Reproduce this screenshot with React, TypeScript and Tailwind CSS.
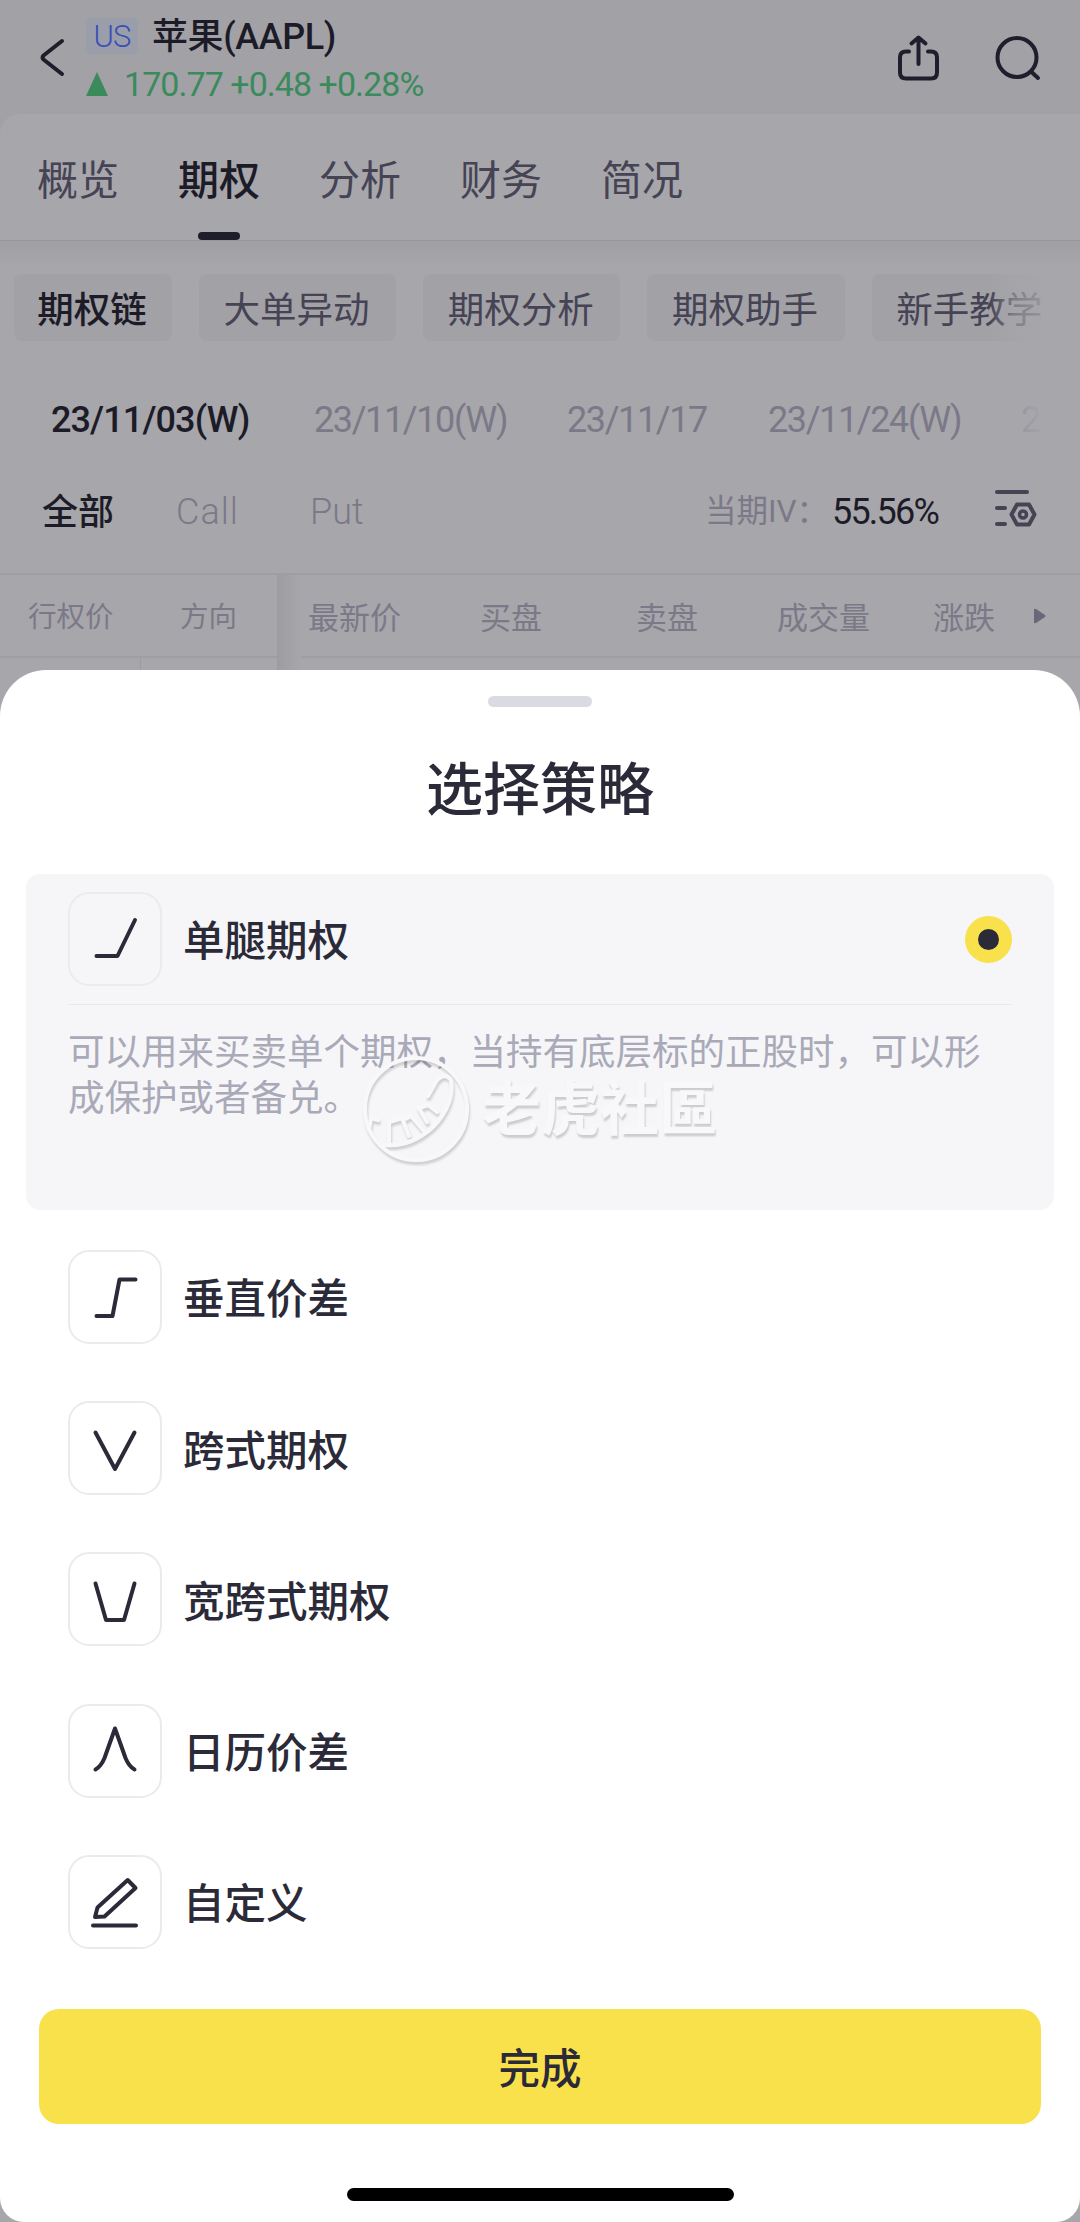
import type { ReactNode } from "react";

const tabs = ["概览", "期权", "分析", "财务", "简况"];
const chips = ["期权链", "大单异动", "期权分析", "期权助手", "新手教学"];

const strokeProps = {
  fill: "none",
  stroke: "#2b2a38",
  strokeWidth: 4,
  strokeLinecap: "round" as const,
  strokeLinejoin: "round" as const,
};

function StrategyIcon({ children }: { children: ReactNode }) {
  return (
    <div className="h-[94px] w-[94px] shrink-0 rounded-[21px] border-2 border-[#ebebef]">
      <svg className="-m-0.5 h-[94px] w-[94px]" viewBox="0 0 94 94" {...strokeProps}>
        {children}
      </svg>
    </div>
  );
}

const strategies: { name: string; icon: ReactNode }[] = [
  { name: "垂直价差", icon: <path d="M28.5 66H44.5L51.5 29.5H67.5" /> },
  { name: "跨式期权", icon: <path d="M27.5 31.5L47 68L66.5 31.5" /> },
  { name: "宽跨式期权", icon: <path d="M27.5 31.5L38 68H56L66.5 31.5" /> },
  { name: "日历价差", icon: <path d="M27.5 65.5Q33 62.5 36.5 54L47 24.5L57.5 54Q61 62.5 66.5 65.5" /> },
  {
    name: "自定义",
    icon: <path d="M27 62L29.5 52.5L59.7 25L67.5 33L36.5 61.5ZM25 70.5H68" />,
  },
];

function Header() {
  return (
    <header className="flex h-[114px] bg-[#a2a1a6]">
      <svg className="mt-[37px] ml-[38px] h-[42px] w-[30px] shrink-0" viewBox="0 0 30 42" fill="none" stroke="#1e1d2a" strokeWidth="4" strokeLinecap="round" strokeLinejoin="round">
        <path d="M24 4L5.500 18.500Q3.500 20.500 5.500 22.500L24 37" />
      </svg>
      <div className="ml-[18px] flex-1">
        <div className="mt-[12px] flex h-[48px] items-center">
          <span className="flex h-[36px] w-[52px] items-center justify-center rounded-[4px] bg-[#9a9eab] pt-[2px] text-[31px] font-light tracking-[-1px] text-[#3a50b4]">US</span>
          <span className="ml-[14px] pt-px text-[36px] font-medium tracking-[-0.4px] whitespace-nowrap text-[#1c1b28]">苹果(AAPL)</span>
        </div>
        <div className="mt-px flex h-[46px] items-center text-[#3a8a5c]">
          <svg className="h-[26px] w-[22px]" viewBox="0 0 22 26" fill="#3a8a5c">
            <path d="M11 1L22 25H0Z" />
          </svg>
          <span className="ml-[16px] pt-px text-[34px] tracking-[-0.950px] whitespace-nowrap">170.77 +0.48 +0.28%</span>
        </div>
      </div>
      <svg className="mt-[34px] h-[52px] w-[46px]" viewBox="0 0 46 52" fill="none" stroke="#1f1e2c" strokeWidth="4" strokeLinecap="round" strokeLinejoin="round">
        <path d="M12 17.500H9Q3 17.500 3 23.500V38.500Q3 44.500 9 44.500H34Q40 44.500 40 38.500V23.500Q40 17.500 34 17.500H31M21.500 30V4M14.500 9.500L21.500 3.500L28.500 9.500" />
      </svg>
      <svg className="mt-[34px] mr-[36px] ml-[51px] h-[52px] w-[50px]" viewBox="0 0 50 52" fill="none" stroke="#1f1e2c" strokeWidth="4" strokeLinecap="round">
        <circle cx="23" cy="23.500" r="19.500" />
        <path d="M37 37.500L44 44" />
      </svg>
    </header>
  );
}

function Tabs() {
  return (
    <nav className="bg-[#a2a1a6]">
      <div className="flex h-[127px] gap-[59px] rounded-tl-[20px] border-b border-[#98979d] bg-[#a7a6ab] pl-[37px]">
        {tabs.map((t, i) => (
          <div key={t} className={i === 1 ? "flex w-[82px] flex-col items-center font-medium text-[#1c1b28]" : "flex w-[82px] flex-col items-center text-[#454354]"}>
            <span className="mt-[37px] text-[41px] leading-[60px] whitespace-nowrap">{t}</span>
            {i === 1 && <span className="mt-[21px] h-[8px] w-[42px] rounded-full bg-[#1e1d2b]" />}
          </div>
        ))}
      </div>
    </nav>
  );
}

function Filters() {
  return (
    <section className="h-[332px] bg-linear-to-b from-[#a09fa4] to-[#a7a6ab] to-[8%]">
      <div className="relative flex w-[1041px] gap-[27px] overflow-hidden pt-[33px] pl-[14px]">
        {chips.map((c, i) => (
          <span key={c} className={i === 0 ? "flex h-[67px] w-[158px] shrink-0 items-center justify-center rounded-[8px] bg-[#a2a1a6] pt-[7px] pr-[2px] text-[36.500px] font-medium text-[#1c1b28]" : "flex h-[67px] w-[197.200px] shrink-0 items-center justify-center rounded-[8px] bg-[#a2a1a6] pt-[7px] pr-[2px] text-[36.500px] text-[#454354]"}>
            {c}
          </span>
        ))}
        <div className="absolute top-[33px] right-0 h-[67px] w-[52px] bg-linear-to-r from-[#a7a6ab]/0 via-[#a7a6ab]/60 to-[#a7a6ab]/80" />
      </div>
      <div className="relative mt-[49px] flex h-[60px] w-[1045px] items-center overflow-hidden pl-[51px] text-[36px] tracking-[-1.400px] whitespace-nowrap text-[#7b7988]">
        <span className="w-[263px] shrink-0 font-medium tracking-[-0.900px] text-[#1c1b28]">23/11/03(W)</span>
        <span className="w-[253px] shrink-0">23/11/10(W)</span>
        <span className="w-[201px] shrink-0">23/11/17</span>
        <span className="w-[253px] shrink-0">23/11/24(W)</span>
        <span className="shrink-0">23/12/01(W)</span>
        <div className="absolute top-0 right-0 h-full w-[72px] bg-linear-to-r from-[#a7a6ab]/0 to-[#a7a6ab]" />
      </div>
      <div className="mt-[31px] flex h-[60px] items-center text-[36px] whitespace-nowrap text-[#7b7988]">
        <span className="ml-[42px] w-[134px] pt-[3px] font-medium text-[#1c1b28]">全部</span>
        <span className="w-[134px] pt-px font-light tracking-[1px]">Call</span>
        <span className="flex-1 pt-px font-light">Put</span>
        <span className="pt-[2px] text-[31.500px]">当期IV：</span>
        <span className="ml-[4px] w-[162px] pt-px tracking-[-1.800px] text-[#1c1b28]">55.56%</span>
        <svg className="mr-[42px] h-[42px] w-[44px]" viewBox="0 0 44 42" fill="none" stroke="#454354" strokeWidth="4" strokeLinecap="round" strokeLinejoin="round">
          <path d="M3 2H33M3 18H11M3 34H11M17.500 24.500L23 14.500H35L40.500 24.500L35 34.500H23Z" />
          <circle cx="29" cy="24.500" r="3.500" strokeWidth="3.500" />
        </svg>
      </div>
    </section>
  );
}

function TableHead() {
  return (
    <section className="h-[170px] bg-[#a7a6ab] text-[31px] whitespace-nowrap text-[#7b7988]">
      <div className="flex h-[85px] items-center border-y-2 border-[#9f9ea3]">
        <span className="ml-[28px] w-[152px] pt-[6px] text-[28.500px]">行权价</span>
        <span className="w-[97px] pt-[6px] text-[28.500px]">方向</span>
        <div className="h-[98px] w-[24px] shrink-0 self-start bg-linear-to-r from-[#9d9ca1] to-[#a7a6ab]" />
        <span className="ml-[7px] w-[172px] pt-[7px]">最新价</span>
        <span className="w-[156px] pt-[7px]">买盘</span>
        <span className="w-[141px] pt-[7px]">卖盘</span>
        <span className="w-[156px] pt-[7px]">成交量</span>
        <span className="w-[100px] pt-[7px]">涨跌</span>
        <svg className="h-[16px] w-[14px]" viewBox="0 0 14 16" fill="#6a6878">
          <path d="M1 2Q1 0 3 1L12 7Q13 8 12 9L3 15Q1 16 1 14Z" />
        </svg>
      </div>
      <div className="ml-[140px] h-[40px] w-px bg-[#9c9ba1]" />
    </section>
  );
}

function Watermark() {
  return (
    <div className="absolute top-[180px] left-[335px] flex items-center">
      <svg className="h-[112px] w-[112px] drop-shadow-[1px_3px_1px_rgba(0,0,0,0.16)]" viewBox="0 0 112 112" fill="none" stroke="#f8f8fa" strokeWidth="4" strokeLinecap="round" strokeLinejoin="round">
        <circle cx="55" cy="55" r="51" />
        <path d="M8 76L10 64L17 66M28 90V68L41 64L48 82M42 66L50 62L63 77M66 68L58 54L67 51L76 58M67 42L76 26Q84 18 90 26Q94 50 72 73Q50 93 24 91" />
      </svg>
      <span className="ml-[9px] text-[59px] leading-[70px] font-bold text-[#f8f8fa] [text-shadow:1px_3px_2px_rgba(0,0,0,0.17)]">老虎社區</span>
    </div>
  );
}

export default function App() {
  return (
    <div className="h-[2222px] w-[1080px] overflow-hidden bg-[#a7a6ab] font-['Roboto','Noto_Sans_CJK_SC',sans-serif]">
      <Header />
      <Tabs />
      <Filters />
      <TableHead />
      <main className="relative -mt-[73px] flex h-[1552px] flex-col rounded-t-[46px] rounded-b-[24px] bg-white text-[#2b2a38]">
        <div className="mx-auto mt-[26px] h-[11px] w-[104px] shrink-0 rounded-full bg-[#dadae2]" />
        <h1 className="mt-[42px] text-center text-[57px] leading-[84px] font-medium">选择策略</h1>
        <section className="relative mx-[26px] mt-[41px] h-[336px] shrink-0 rounded-[14px] bg-[#f6f6f8] px-[42px] pt-[18px]">
          <div className="flex h-[94px] items-center">
            <StrategyIcon>
              <path d="M28.500 64H49.500L67 28" />
            </StrategyIcon>
            <span className="ml-[21px] flex-1 pt-[7px] text-[41.500px] font-medium">单腿期权</span>
            <span className="flex h-[47px] w-[47px] items-center justify-center rounded-full bg-[#f9e14b]">
              <span className="h-[21px] w-[21px] rounded-full bg-[#2b2a38]" />
            </span>
          </div>
          <div className="mt-[18px] h-px bg-[#e9e9ee]" />
          <p className="mt-[25px] text-[36.500px] leading-[46px] whitespace-nowrap text-[#a9a9b8]">
            可以用来买卖单个期权，当持有底层标的正股时，可以形
            <br />
            成保护或者备兑。
          </p>
          <Watermark />
        </section>
        <ul className="mt-[40px] ml-[68px] flex flex-col gap-[57.200px]">
          {strategies.map((s) => (
            <li key={s.name} className="flex h-[94px] items-center">
              <StrategyIcon>{s.icon}</StrategyIcon>
              <span className="ml-[21px] pt-[7px] text-[41.500px] font-medium">{s.name}</span>
            </li>
          ))}
        </ul>
        <button className="mx-[39px] mt-[60px] h-[115px] shrink-0 rounded-[20px] bg-[#f9e14b] pt-[8px] text-[41.500px] font-medium">完成</button>
        <div className="mx-auto mt-[64px] h-[13px] w-[387px] shrink-0 rounded-full bg-black" />
      </main>
    </div>
  );
}
